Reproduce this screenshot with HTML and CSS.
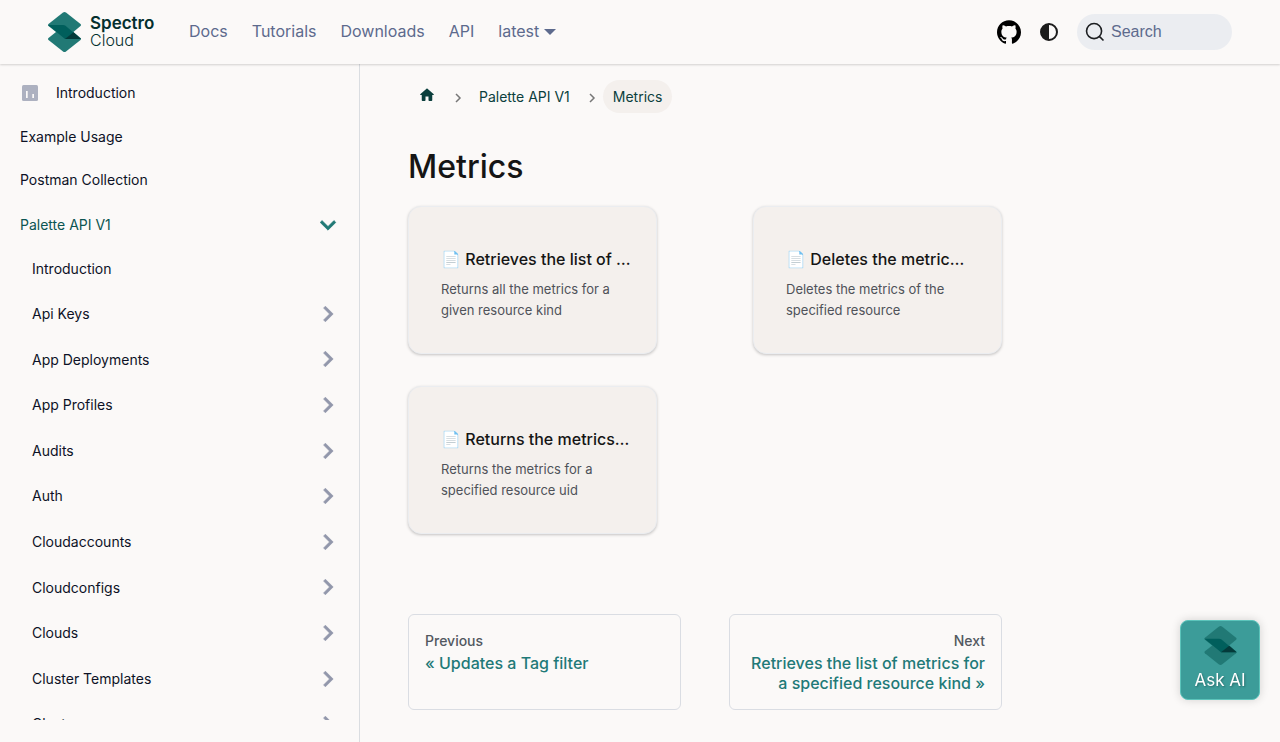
FILE: index.html
```html
<!DOCTYPE html>
<html lang="en">
<head>
<meta charset="utf-8">
<meta name="viewport" content="width=device-width, initial-scale=1">
<title>Metrics | Spectro Cloud</title>
<link rel="stylesheet" href="styles.css">
</head>
<body>
<svg class="defs" width="0" height="0" aria-hidden="true">
  <symbol id="mark" viewBox="0 0 33 40">
    <path fill="#217975" d="M15 .5q1.500-1 3 0L32.500 12q1 1 0 2L17 27 .5 14q-1-1 0-2z"/>
    <path fill="#217975" d="M17 13 32.500 26q1 1 0 2L18 39.500q-1.500 1-3 0L.5 28q-1-1 0-2L8 20z"/>
    <path fill="#005f5c" d="M0 13h15q1.500 0 2.500.8L33 27H17z"/>
    <path fill="#043a3a" d="M25.500 20.200 33 27H17z"/>
  </symbol>
  <symbol id="chevron" viewBox="0 0 24 24">
    <path fill="currentColor" stroke="currentColor" stroke-width=".5" d="M7.410 15.410 12 10.830l4.590 4.580L18 14l-6-6-6 6z"/>
  </symbol>
  <symbol id="crumb" viewBox="0 0 8 10">
    <path fill="none" stroke="currentColor" stroke-width="1.500" d="M2 1l4 4-4 4"/>
  </symbol>
</svg>

<header class="navbar">
  <a class="brand" href="#">
    <svg class="brand-mark" aria-hidden="true"><use href="#mark"/></svg>
    <span class="brand-text"><b class="brand-strong">Spectro</b><span>Cloud</span></span>
  </a>
  <nav class="nav-links" aria-label="Main">
    <a href="#">Docs</a>
    <a href="#">Tutorials</a>
    <a href="#">Downloads</a>
    <a href="#">API</a>
    <a class="dropdown" href="#">latest</a>
  </nav>
  <div class="nav-tools">
    <a class="github" href="#" aria-label="GitHub">
      <svg width="24" height="24" viewBox="0 0 24 24"><path d="M12 .297c-6.630 0-12 5.373-12 12 0 5.303 3.438 9.800 8.205 11.385.6.113.82-.258.82-.577 0-.285-.01-1.040-.015-2.040-3.338.724-4.042-1.610-4.042-1.610C4.422 18.070 3.633 17.700 3.633 17.700c-1.087-.744.084-.729.084-.729 1.205.084 1.838 1.236 1.838 1.236 1.070 1.835 2.809 1.305 3.495.998.108-.776.417-1.305.76-1.605-2.665-.3-5.466-1.332-5.466-5.930 0-1.310.465-2.380 1.235-3.220-.135-.303-.54-1.523.105-3.176 0 0 1.005-.322 3.300 1.230.96-.267 1.980-.399 3-.405 1.020.006 2.040.138 3 .405 2.280-1.552 3.285-1.230 3.285-1.230.645 1.653.24 2.873.12 3.176.765.840 1.230 1.910 1.230 3.220 0 4.610-2.805 5.625-5.475 5.920.42.36.81 1.096.81 2.220 0 1.606-.015 2.896-.015 3.286 0 .315.21.69.825.57C20.565 22.092 24 17.592 24 12.297c0-6.627-5.373-12-12-12"/></svg>
    </a>
    <button class="theme" type="button" aria-label="Switch theme">
      <svg width="18" height="18" viewBox="0 0 18 18"><circle cx="9" cy="9" r="8" fill="none" stroke="#1c1c1c" stroke-width="2"/><path fill="#1c1c1c" d="M9 1v16A8 8 0 0 1 9 1z"/></svg>
    </button>
    <button class="search" type="button">
      <svg width="20" height="20" viewBox="0 0 20 20" aria-hidden="true"><path d="M14.386 14.386l4.088 4.088-4.088-4.088c-2.942 2.941-7.711 2.941-10.653 0-2.941-2.942-2.941-7.711 0-10.653 2.942-2.941 7.711-2.941 10.653 0 2.941 2.942 2.941 7.711 0 10.653z" fill="none" stroke="#1c1e21" stroke-width="1.600" stroke-linecap="round"/></svg>
      <span>Search</span>
    </button>
  </div>
</header>

<div class="layout">
  <aside class="sidebar">
    <nav class="menu" aria-label="Docs sidebar">
      <a class="item with-icon" href="#"><svg width="16" height="16" viewBox="0 0 16 16" aria-hidden="true"><rect width="16" height="16" rx="1.500" fill="#adb1c0"/><path fill="#fbf9f8" d="M4 6h1.700v7H4zM10.300 9H12v4h-1.700z"/></svg>Introduction</a>
      <a class="item" href="#">Example Usage</a>
      <a class="item" href="#">Postman Collection</a>
      <a class="item category open" href="#">Palette API V1<svg class="caret" aria-hidden="true"><use href="#chevron"/></svg></a>
      <div class="submenu">
        <a class="item" href="#">Introduction</a>
        <a class="item category" href="#">Api Keys<svg class="caret" aria-hidden="true"><use href="#chevron"/></svg></a>
        <a class="item category" href="#">App Deployments<svg class="caret" aria-hidden="true"><use href="#chevron"/></svg></a>
        <a class="item category" href="#">App Profiles<svg class="caret" aria-hidden="true"><use href="#chevron"/></svg></a>
        <a class="item category" href="#">Audits<svg class="caret" aria-hidden="true"><use href="#chevron"/></svg></a>
        <a class="item category" href="#">Auth<svg class="caret" aria-hidden="true"><use href="#chevron"/></svg></a>
        <a class="item category" href="#">Cloudaccounts<svg class="caret" aria-hidden="true"><use href="#chevron"/></svg></a>
        <a class="item category" href="#">Cloudconfigs<svg class="caret" aria-hidden="true"><use href="#chevron"/></svg></a>
        <a class="item category" href="#">Clouds<svg class="caret" aria-hidden="true"><use href="#chevron"/></svg></a>
        <a class="item category" href="#">Cluster Templates<svg class="caret" aria-hidden="true"><use href="#chevron"/></svg></a>
        <a class="item category" href="#">Clusters<svg class="caret" aria-hidden="true"><use href="#chevron"/></svg></a>
      </div>
    </nav>
  </aside>

  <main class="content">
    <div class="column">
      <nav class="breadcrumbs" aria-label="Breadcrumbs">
        <a class="crumb home" href="#" aria-label="Home page"><svg width="18" height="18" viewBox="0 0 24 24"><path fill="currentColor" d="M10 19v-5h4v5c0 .55.45 1 1 1h3c.55 0 1-.45 1-1v-7h1.700c.46 0 .68-.57.33-.87L12.670 3.600c-.38-.34-.96-.34-1.340 0l-8.360 7.530c-.34.3-.13.87.33.87H5v7c0 .55.45 1 1 1h3c.55 0 1-.45 1-1z"/></svg></a>
        <svg class="sep" aria-hidden="true"><use href="#crumb"/></svg>
        <a class="crumb" href="#">Palette API V1</a>
        <svg class="sep" aria-hidden="true"><use href="#crumb"/></svg>
        <span class="crumb current">Metrics</span>
      </nav>
      <h1 class="title">Metrics</h1>
      <section class="cards">
        <a class="card" href="#"><h2 class="card-title">📄️ Retrieves the list of …</h2><p class="card-text">Returns all the metrics for a given resource kind</p></a>
        <a class="card" href="#"><h2 class="card-title">📄️ Deletes the metric…</h2><p class="card-text">Deletes the metrics of the specified resource</p></a>
        <a class="card" href="#"><h2 class="card-title">📄️ Returns the metrics…</h2><p class="card-text">Returns the metrics for a specified resource uid</p></a>
      </section>
      <nav class="pager" aria-label="Docs pages">
        <a class="page-link" href="#"><span class="page-label">Previous</span><span>« Updates a Tag filter</span></a>
        <a class="page-link next" href="#"><span class="page-label">Next</span><span>Retrieves the list of metrics for a specified resource kind »</span></a>
      </nav>
    </div>
  </main>
</div>

<button class="ask" type="button">
  <svg class="ask-mark" aria-hidden="true"><use href="#mark"/></svg>
  <span>Ask AI</span>
</button>
</body>
</html>
```
FILE: styles.css
```css
* { box-sizing: border-box; }

body {
  margin: 0;
  background: #fbf9f8;
  color: #151515;
  font-family: Inter, "Liberation Sans", sans-serif;
  font-size: 16px;
}

a { color: inherit; text-decoration: none; }
button { border: 0; padding: 0; background: none; cursor: pointer; }
svg { flex: none; }
.defs { position: absolute; }

.navbar {
  position: sticky;
  top: 0;
  z-index: 2;
  display: flex;
  align-items: center;
  height: 64px;
  padding: 0 48px;
  background: #fbf9f8;
  box-shadow: 0 1px 2px rgba(0, 0, 0, 0.16);
}

.brand {
  display: flex;
  align-items: center;
  gap: 9px;
  width: 141px;
  color: #042f2e;
}
.brand-mark { width: 33px; height: 40px; }
.brand-text {
  display: flex;
  flex-direction: column;
  font-size: 16px;
  font-weight: 300;
  line-height: 17px;
}
.brand-strong { font-size: 17px; font-weight: 600; }

.nav-links {
  display: flex;
  gap: 24px;
  padding-bottom: 2px;
  color: #5d6a8d;
  line-height: 24px;
}
.dropdown { display: flex; align-items: center; gap: 5px; }
.dropdown::after {
  content: "";
  margin-top: 2px;
  border: 6px solid transparent;
  border-top-color: currentColor;
  border-bottom: 0;
}

.nav-tools { display: flex; align-items: center; margin-left: auto; }
.github, .theme { display: flex; }
.theme { margin: 0 19px; }
.search {
  display: flex;
  align-items: center;
  gap: 6px;
  width: 155px;
  height: 36px;
  padding: 0 8px;
  border-radius: 18px;
  background: #ebedf1;
  color: #5d6a8d;
  font-family: "Liberation Sans", Arial, sans-serif;
  font-size: 16px;
}

.layout { display: flex; }

.sidebar {
  position: sticky;
  top: 64px;
  flex: none;
  width: 360px;
  height: calc(100vh - 64px);
  padding-bottom: 22px;
  border-right: 1px solid #dadde1;
}
.menu {
  height: 100%;
  padding: 9px 16px 0 8px;
  overflow-y: auto;
  scrollbar-width: none;
}
.submenu { padding-left: 12px; }
.item {
  display: flex;
  align-items: center;
  margin-bottom: 4px;
  padding: 10px 12px;
  color: #0d1226;
  font-size: 14px;
  line-height: 1.4;
}
.with-icon { gap: 18px; padding-left: 14px; }
.category {
  justify-content: space-between;
  padding: 11px 3px 11px 12px;
}
.open { color: #0b5551; }
.caret {
  width: 24px;
  height: 24px;
  margin: -4px 0;
  color: #9297ab;
  transform: rotate(90deg) scale(1.3);
}
.open .caret { color: #217975; transform: rotate(180deg) scale(1.3); }

.content { flex: 1; min-width: 0; }
.column { width: 75%; padding: 16px 48px 32px; }

.breadcrumbs { display: flex; align-items: center; margin-bottom: 32px; color: #0b3f3d; }
.crumb { padding: 6px 10px; border-radius: 17px; font-size: 14px; line-height: 21px; }
.home { display: flex; padding: 5px 10px 9px; }
.sep { width: 8px; height: 10px; margin: 2px 7px 0 8px; color: #777; }
.current { background: #f4f0ed; }

.title { margin: 0 0 18px; font-size: 32px; font-weight: 450; line-height: 43px; }

.cards {
  display: grid;
  grid-template-columns: 1fr 1fr;
  gap: 32px 96px;
  margin-bottom: 80px;
}
.card {
  min-width: 0;
  padding: 40px 24px 32px 32px;
  border: 1px solid #ebedf0;
  border-radius: 13px;
  background: #f4f0ed;
  box-shadow: 0 1px 3px rgba(0, 0, 0, 0.22);
}
.card-title {
  margin: 0 0 8px;
  overflow: hidden;
  font-size: 16px;
  font-weight: 500;
  line-height: 24px;
  text-overflow: ellipsis;
  white-space: nowrap;
}
.card-text { margin: 0; color: #4f5259; font-size: 13px; line-height: 21px; }

.pager { display: grid; grid-template-columns: 1fr 1fr; gap: 48px; }
.page-link {
  display: flex;
  flex-direction: column;
  padding: 16px;
  border: 1px solid #dadde3;
  border-radius: 6px;
  color: #1f7a78;
  font-weight: 500;
  line-height: 20px;
}
.page-label { margin-bottom: 2px; color: #525860; font-size: 14px; }
.next { text-align: right; }

.ask {
  position: fixed;
  right: 20px;
  bottom: 42px;
  z-index: 3;
  display: flex;
  flex-direction: column;
  align-items: center;
  gap: 3px;
  width: 80px;
  height: 80px;
  padding-top: 5px;
  border: 1px solid #5cc4bb;
  border-radius: 8px;
  background: #3c9c99;
  box-shadow: 0 0 10px rgba(0, 0, 0, 0.16);
  color: #fff;
  font-family: Inter, sans-serif;
  font-size: 17px;
  line-height: 24px;
  text-shadow: 1px 1px 2px rgba(0, 0, 0, 0.3);
}
.ask-mark { width: 33px; height: 39px; }
```
